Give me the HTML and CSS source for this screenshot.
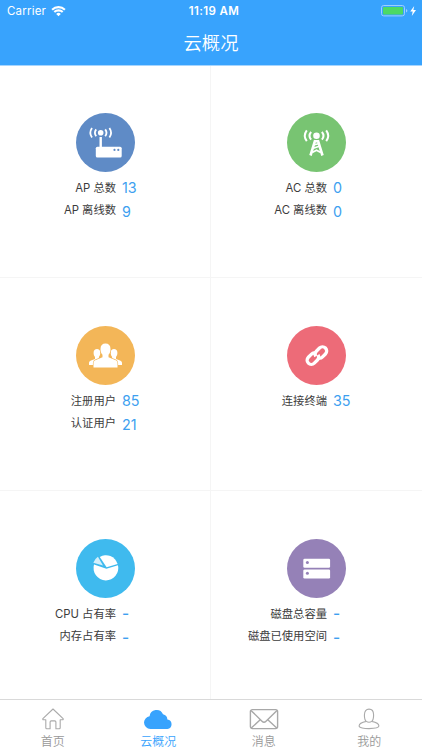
FILE: index.html
```
<!DOCTYPE html>
<html lang="zh-CN">
<head>
  <meta charset="UTF-8" />
  <meta name="viewport" content="width=device-width, initial-scale=1" />
  <title>云概况</title>
  <link rel="stylesheet" href="styles.css">
</head>
<body>

<header class="header">
  <div class="status-bar">
    <div class="carrier">
      <span>Carrier</span>
      <svg width="15" height="12" viewBox="0 0 15 12" fill="none" stroke="#fff" stroke-width="2.1">
        <path d="M1.1 4.7a9.2 9.2 0 0 1 12.8 0M3.3 7.1a6.1 6.1 0 0 1 8.4 0" />
        <path d="M7.5 11.3 5.2 8.9a3.3 3.3 0 0 1 4.6 0z" fill="#fff" stroke="none" />
      </svg>
    </div>
    <div class="time">11:19 AM</div>
    <div class="battery">
      <svg width="36" height="12" viewBox="0 0 36 12">
        <rect x=".5" y=".5" width="23" height="10.4" rx="2.2" fill="none" stroke="#9dcfff" />
        <rect x="2" y="2" width="20" height="7.4" rx="1" fill="#4cd964" />
        <path d="M25 4v3.6q1.4-.5 1.4-1.8T25 4z" fill="#9dcfff" />
        <path d="M33.2 1 29.2 6.6h2.5L30.8 11l4.2-5.9h-2.6z" fill="#fff" />
      </svg>
    </div>
  </div>
  <h1 class="title">云概况</h1>
</header>

<main class="grid">
  <section class="cell">
    <svg class="icon" viewBox="0 0 59 59">
      <circle cx="29.5" cy="29.5" r="29.5" fill="#5f8bc6" />
      <circle cx="24.7" cy="19.8" r="2.8" fill="#fff" />
      <path d="M24.7 24v10" stroke="#fff" stroke-width="2.4" />
      <path d="M20.2 16.4a5.6 5.6 0 0 0 0 6.8M29.2 16.4a5.6 5.6 0 0 1 0 6.8M16 15a8.4 8.4 0 0 0 0 9.6M33.4 15a8.4 8.4 0 0 1 0 9.6" fill="none" stroke="#fff" stroke-width="1.8" />
      <rect x="19.8" y="33.7" width="25.9" height="10.8" rx="1.6" fill="#fff" />
      <circle cx="38.5" cy="36.9" r="1.1" fill="#5f8bc6" />
      <circle cx="42.3" cy="36.9" r="1.1" fill="#5f8bc6" />
    </svg>
    <div class="stats">
      <span class="label">AP 总数</span><span class="value">13</span>
      <span class="label">AP 离线数</span><span class="value">9</span>
    </div>
  </section>

  <section class="cell">
    <svg class="icon" viewBox="0 0 59 59">
      <circle cx="29.5" cy="29.5" r="29.5" fill="#78c472" />
      <circle cx="29.5" cy="22.8" r="3.3" fill="#fff" />
      <path d="M24.1 18.9a6.2 6.2 0 0 0 0 7.8M34.9 18.9a6.2 6.2 0 0 1 0 7.8M19.8 17.4a9 9 0 0 0 0 10.8M39.2 17.4a9 9 0 0 1 0 10.8" fill="none" stroke="#fff" stroke-width="2" />
      <path d="M28.2 27.2 23.5 42.5M30.8 27.2l4.7 15.3M28 28.2h3" stroke="#fff" stroke-width="2.6" />
      <path d="M27.4 31.8l4-1M26.4 35.2l5.8-2M25.2 39.6l4.3-2.4 4.3 2.4" fill="none" stroke="#fff" stroke-width="1.7" />
    </svg>
    <div class="stats">
      <span class="label">AC 总数</span><span class="value">0</span>
      <span class="label">AC 离线数</span><span class="value">0</span>
    </div>
  </section>

  <section class="cell">
    <svg class="icon" viewBox="0 0 59 59">
      <circle cx="29.5" cy="29.5" r="29.5" fill="#f3b658" />
      <g fill="#fff">
        <path d="M21 23c2 0 3.3 1.3 3.3 3.7 0 1.8-.6 3.2-1.4 4.2v2l3 1.4V39H13v-1.8c0-1.5.7-2.1 2-2.6l4-1.7v-2c-.9-1-1.4-2.4-1.4-4.2 0-2.4 1.4-3.7 3.4-3.7z" />
        <path d="M38 23c-2 0-3.3 1.3-3.3 3.7 0 1.8.6 3.2 1.4 4.2v2l-3 1.4V39H46v-1.8c0-1.5-.7-2.1-2-2.6l-4-1.7v-2c.9-1 1.4-2.4 1.4-4.2 0-2.4-1.4-3.7-3.4-3.7z" />
        <path d="M29.5 17.6c3.2 0 5 2 5 5.3 0 2.7-.8 4.6-2 5.8v2.6l6.6 2.6c1.6.7 2.4 1.7 2.4 3.4v4.1h-24v-4.1c0-1.7.8-2.7 2.4-3.4l6.6-2.6v-2.6c-1.2-1.2-2-3.1-2-5.8 0-3.3 1.8-5.3 5-5.3z" stroke="#f3b658" stroke-width="1.2" paint-order="stroke" />
      </g>
    </svg>
    <div class="stats">
      <span class="label">注册用户</span><span class="value">85</span>
      <span class="label">认证用户</span><span class="value">21</span>
    </div>
  </section>

  <section class="cell">
    <svg class="icon" viewBox="0 0 59 59">
      <circle cx="29.5" cy="29.5" r="29.5" fill="#ed6b78" />
      <g transform="rotate(-45 29.9 29.6)" fill="none" stroke="#fff" stroke-width="3.3">
        <path d="M29.6 32.8q1 1.7 3 1.7h4.5a4.2 4.2 0 0 0 0-8.4h-4.5a4.2 4.2 0 0 0-4 3.2" />
        <path d="M30.2 26.4q-1-1.7-3-1.7h-4.5a4.2 4.2 0 0 0 0 8.4h4.5a4.2 4.2 0 0 0 4-3.2" />
      </g>
    </svg>
    <div class="stats">
      <span class="label">连接终端</span><span class="value">35</span>
    </div>
  </section>

  <section class="cell">
    <svg class="icon" viewBox="0 0 59 59">
      <circle cx="29.5" cy="29.5" r="29.5" fill="#3fbaee" />
      <path d="M30.4 29.8 42 26.2A12.4 12.4 0 1 1 18 25.6z" fill="#fff" />
      <path d="M30.6 28.3 23.8 17.9A12.2 12.2 0 0 1 41.6 24.9z" fill="#fff" />
      <path d="M27 26.6 17.3 23.7a12 12 0 0 1 4.6-6z" fill="#d3effb" />
    </svg>
    <div class="stats">
      <span class="label">CPU 占有率</span><span class="value dash">-</span>
      <span class="label">内存占有率</span><span class="value dash">-</span>
    </div>
  </section>

  <section class="cell">
    <svg class="icon" viewBox="0 0 59 59">
      <circle cx="29.5" cy="29.5" r="29.5" fill="#9581b7" />
      <rect x="16.3" y="19.7" width="26.8" height="9.1" rx="1.3" fill="#fff" />
      <rect x="16.3" y="30.4" width="26.8" height="9.1" rx="1.3" fill="#fff" />
      <circle cx="20.4" cy="23.5" r="1.5" fill="#9581b7" />
      <circle cx="20.4" cy="34.2" r="1.5" fill="#9581b7" />
    </svg>
    <div class="stats">
      <span class="label">磁盘总容量</span><span class="value dash">-</span>
      <span class="label">磁盘已使用空间</span><span class="value dash">-</span>
    </div>
  </section>
</main>

<nav class="tabs">
  <a class="tab">
    <svg width="22" height="22" viewBox="0 0 22 22" fill="none" stroke="#aaa" stroke-width="1.1" stroke-linejoin="round">
      <path d="M11 1 .9 10.6q-.5 1 .6 1.1H3.8v8q0 1 1 1h3.3v-6.6q0-1.2 1.2-1.2h3.4q1.2 0 1.2 1.2v6.6h3.3q1 0 1-1v-8h2.3q1.1-.1.6-1.1z" />
    </svg>
    <span>首页</span>
  </a>
  <a class="tab active">
    <svg width="30" height="22" viewBox="0 0 30 22" fill="#38a3fd">
      <path d="M7.4 21A6.6 6.6 0 0 1 1 14.6 6.4 6.4 0 0 1 6.6 8.3 7 7 0 0 1 20 6.3 5.6 5.6 0 0 1 24.4 11.4 4.85 4.85 0 0 1 24.4 21z" />
    </svg>
    <span>云概况</span>
  </a>
  <a class="tab">
    <svg width="30" height="22" viewBox="0 0 30 22" fill="none" stroke="#a8a8a8" stroke-width="1.4">
      <rect x="1.4" y="1.6" width="27.2" height="19" rx="2" />
      <path d="M2 2.4 13 13.3q2 1.9 4 0L28 2.4M2 20.2l9.2-8.4M28 20.2l-9.2-8.4" />
    </svg>
    <span>消息</span>
  </a>
  <a class="tab">
    <svg width="22" height="22" viewBox="0 0 22 22" fill="none" stroke="#aaa" stroke-width="1.1">
      <path d="M8.2 13.4C6.6 12 6.4 9.5 6.4 7c0-4 1.8-5.9 4.6-5.9S15.6 3 15.6 7c0 2.5-.2 5-1.8 6.4 3.6.7 7.1 2 7.1 4.7 0 1.9-4.9 2.5-9.9 2.5s-9.9-.6-9.9-2.5c0-2.7 3.5-4 7.1-4.7zq2.8 1.7 5.6 0" />
    </svg>
    <span>我的</span>
  </a>
</nav>

</body>
</html>
```
FILE: styles.css
```
* { box-sizing: border-box; }
body {
  margin: 0;
  height: 750px;
  display: flex;
  flex-direction: column;
  background: #fff;
  color: #3c3c3c;
  font-family: Inter, "Noto Sans CJK SC", sans-serif;
  overflow: hidden;
}
svg { display: block; flex-shrink: 0; }

.header { height: 65px; background: #38a3fd; color: #fff; }
.status-bar {
  display: grid;
  grid-template-columns: 1fr auto 1fr;
  align-items: center;
  height: 22px;
  padding: 0 5px 0 7px;
  font-size: 11.5px;
}
.carrier { display: flex; align-items: center; gap: 5px; letter-spacing: 0.2px; }
.time { font-weight: 600; letter-spacing: 0.4px; padding-left: 4px; }
.battery { display: flex; justify-content: flex-end; }
.title {
  margin: 0;
  font-size: 18.3px;
  font-weight: 350;
  line-height: 42px;
  text-align: center;
}

.grid {
  flex: 1;
  display: grid;
  grid-template-columns: 211px 211px;
  grid-template-rows: 212px 213px 1fr;
  border-top: 1px solid #a6d5fe;
}
.cell {
  padding-top: 46.5px;
  border-right: 1px solid #f5f5f5;
  border-bottom: 1px solid #f5f5f5;
}
.cell:nth-child(2n) { border-right: none; }
.cell:nth-child(n+3) { padding-top: 47.5px; }
.cell:nth-last-child(-n+2) { border-bottom: none; }
.icon { width: 59px; height: 59px; margin-left: 76px; }
.stats {
  display: grid;
  grid-template-columns: 116px auto;
  column-gap: 6px;
  grid-auto-rows: 23px;
  margin-top: 4.5px;
}
.label { font-size: 11.3px; line-height: 22px; text-align: right; white-space: nowrap; }
.label:nth-child(1) { padding-top: 1px; }
.value { font-size: 14.3px; line-height: 23px; color: #3d9ff0; }
.value:nth-child(4) { padding-top: 1px; }
.dash { font-size: 15.5px; font-weight: 500; }

.tabs {
  display: flex;
  height: 51px;
  border-top: 1px solid #d9d9d9;
}
.tab {
  flex: 1;
  display: flex;
  flex-direction: column;
  align-items: center;
  gap: 2px;
  padding-top: 8px;
  font-size: 12px;
  line-height: 20px;
  color: #999;
}
.tab span { font-weight: 350; }
.tab.active { color: #38a3fd; }
```
